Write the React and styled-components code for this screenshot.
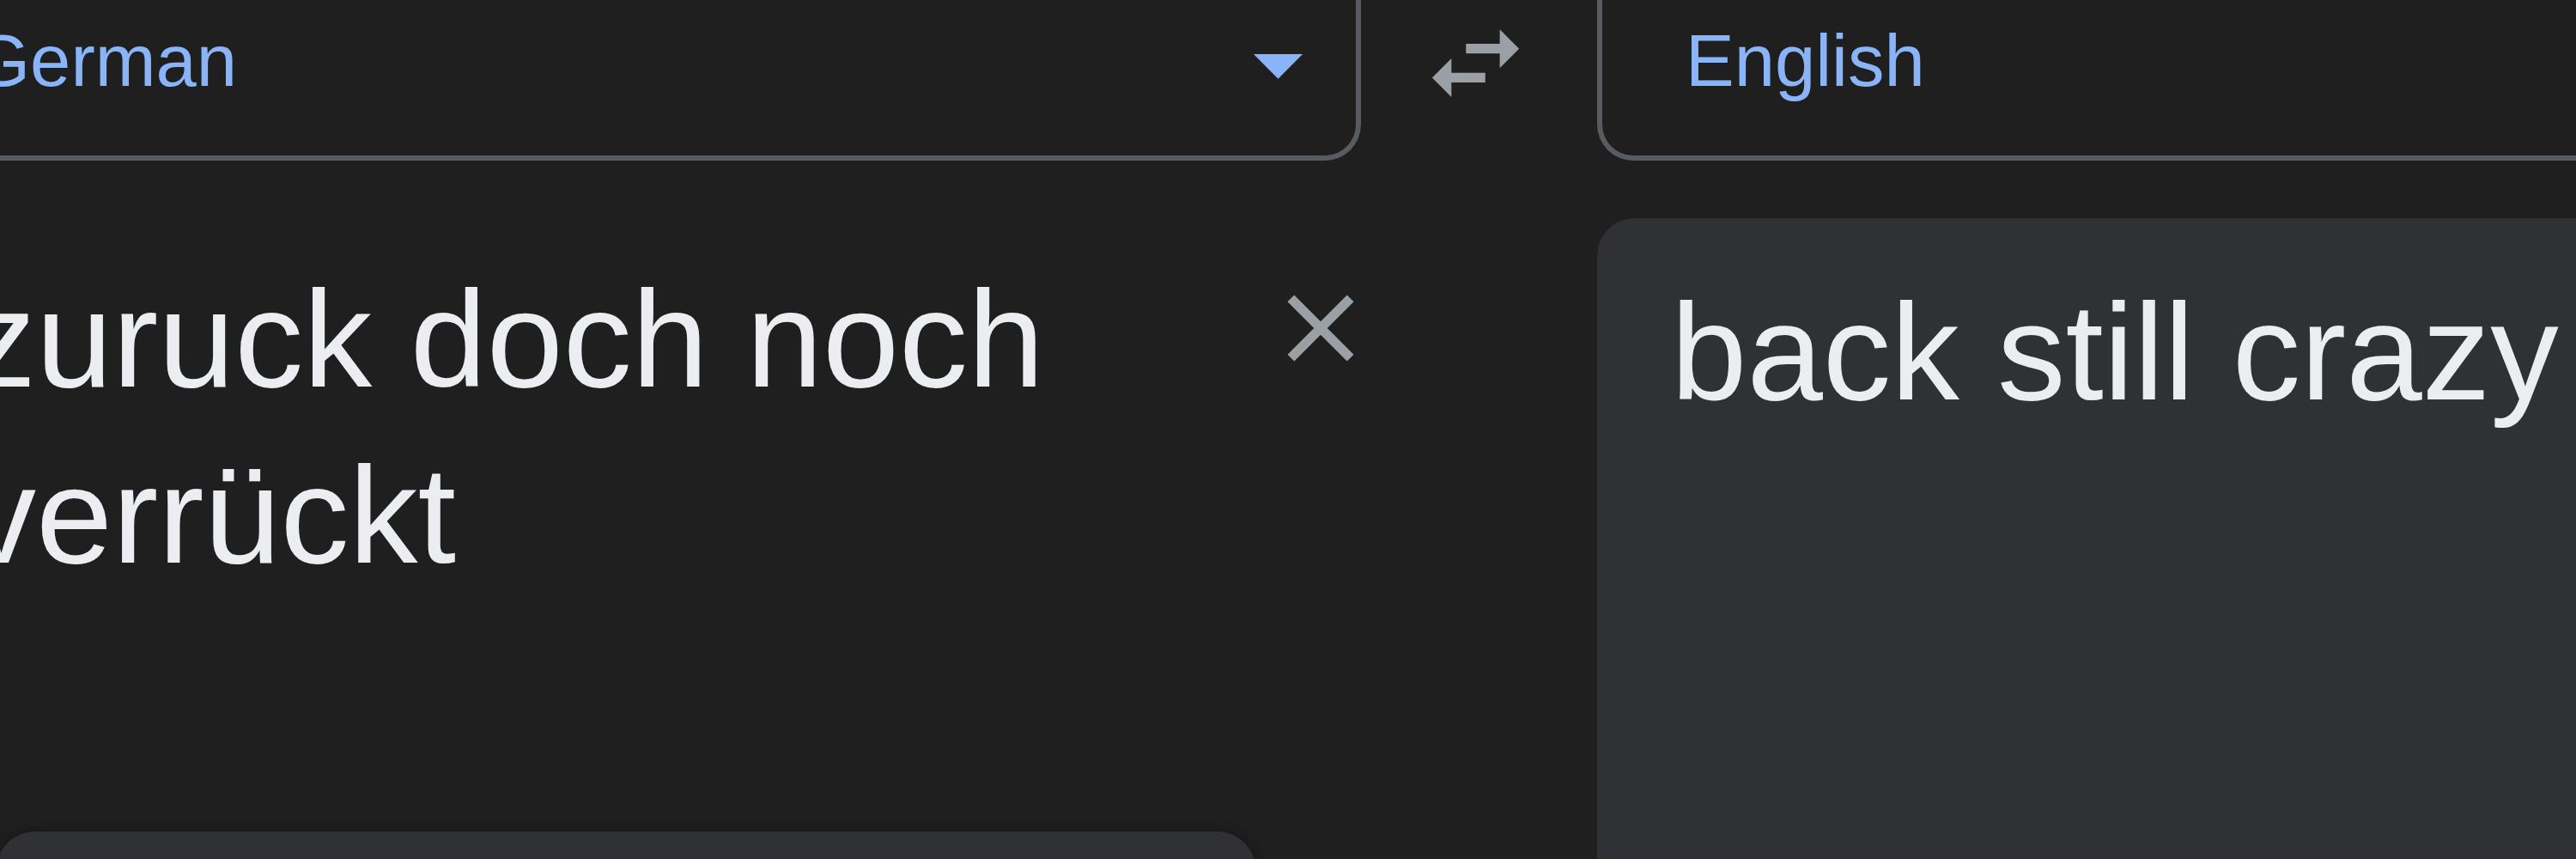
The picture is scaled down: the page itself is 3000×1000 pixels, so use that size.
import React from 'react';
import styled, { createGlobalStyle } from 'styled-components';

const GlobalStyle = createGlobalStyle`
  html, body {
    margin: 0;
    padding: 0;
    background: #1f1f20;
  }
  body {
    font-family: "Liberation Sans", Arial, sans-serif;
    overflow: hidden;
  }
`;

const Page = styled.div`
  width: 3000px;
  height: 1000px;
  overflow: hidden;
  background: #1f1f20;
`;

// whole translate card, scrolled a bit so the left edge is cut off
const Board = styled.div`
  display: grid;
  grid-template-columns: 1723px 275px 1723px;
  grid-template-rows: 227px auto;
  row-gap: 67px;
  margin-left: -138px;
  margin-top: -40px;
`;

const LangBox = styled.div`
  box-sizing: border-box;
  height: 227px;
  display: flex;
  align-items: center;
  justify-content: space-between;
  padding: 0 22px 0 ${(p) => p.$inset}px;
  border: 6px solid #585b5f;
  border-top: none;
  border-radius: 0 0 42px 42px;
`;

const LangName = styled.span`
  font-size: 85px;
  color: #8ab4f8;
  line-height: 1.15;
`;

const DropIcon = styled.svg`
  display: block;
  margin-top: 8px;
  fill: #8ab4f8;
`;

const SwapCell = styled.div`
  display: flex;
  align-items: center;
  justify-content: center;
  padding-right: 8px;
`;

// source side
const SourcePane = styled.div`
  box-sizing: border-box;
  height: 714px;
  display: grid;
  grid-template-columns: 1fr 132px;
  align-items: start;
  padding: 38px 0 0 100px;
  margin-right: -19px;
`;

const InputText = styled.div`
  font-size: 160px;
  line-height: 205px;
  color: #ebedf0;
`;

const ClearButton = styled.button`
  margin-top: 24px;
  width: 132px;
  height: 132px;
  padding: 0;
  border: none;
  background: transparent;
  display: flex;
  align-items: center;
  justify-content: center;
`;

const ToolPanel = styled.div`
  margin-left: 133px;
  width: 1468px;
  height: 300px;
  background: #303134;
  border-radius: 46px 46px 0 0;
  box-shadow: 0 0 14px rgba(0, 0, 0, 0.35);
`;

// target side
const TargetPane = styled.div`
  box-sizing: border-box;
  grid-column: 3;
  grid-row: 2 / span 2;
  min-height: 800px;
  background: #303134;
  border-radius: 44px 0 0 0;
  padding: 54px 0 0 86px;
`;

const OutputText = styled.div`
  font-size: 159px;
  line-height: 205px;
  color: #ebedf0;
  white-space: nowrap;
`;

const Icon = styled.svg`
  display: block;
  fill: #9aa0a6;
`;

const App = () => {
  return (
    <Page>
      <GlobalStyle />
      <Board>
        <LangBox $inset={101}>
          <LangName>German</LangName>
          <DropIcon width="137" height="137" viewBox="0 0 24 24">
            <path d="M7 10l5 5 5-5z" />
          </DropIcon>
        </LangBox>
        <SwapCell>
          <Icon width="135" height="135" viewBox="0 0 24 24">
            <path d="M6.99 11L3 15l3.99 4v-3H14v-2H6.99v-3zM21 9l-4-4v3H10v2h7v3l4-4z" />
          </Icon>
        </SwapCell>
        <LangBox $inset={97}>
          <LangName>English</LangName>
        </LangBox>

        <div>
          <SourcePane>
            <InputText>zuruck doch noch verrückt</InputText>
            <ClearButton aria-label="Clear source text">
              <Icon width="132" height="132" viewBox="0 0 24 24">
                <path d="M19 6.41L17.59 5 12 10.59 6.41 5 5 6.41 10.59 12 5 17.59 6.41 19 12 13.41 17.59 19 19 17.59 13.41 12z" />
              </Icon>
            </ClearButton>
          </SourcePane>
          <ToolPanel />
        </div>
        <TargetPane>
          <OutputText>back still crazy</OutputText>
        </TargetPane>
      </Board>
    </Page>
  );
};

export default App;
